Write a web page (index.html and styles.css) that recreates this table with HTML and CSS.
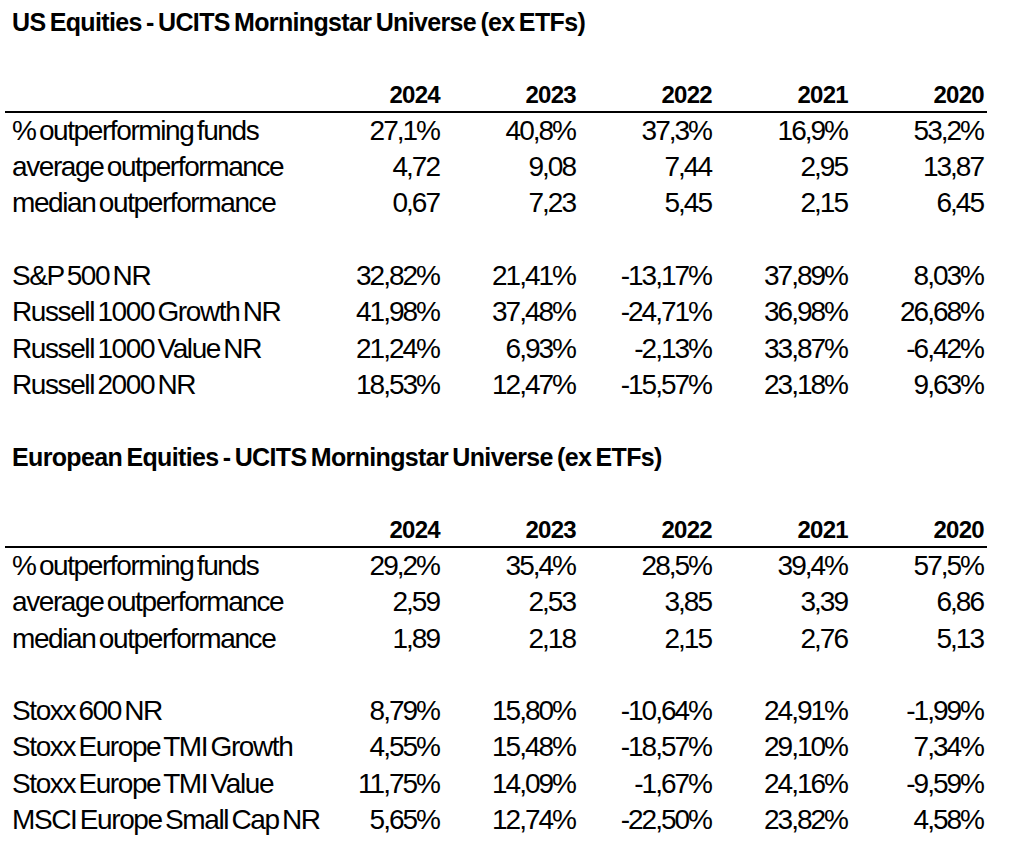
FILE: index.html
```html
<!DOCTYPE html>
<html lang="en">
<head>
<meta charset="utf-8">
<title>Equities - UCITS Morningstar Universe</title>
<link rel="stylesheet" href="styles.css">
</head>
<body>
<div class="page">
  <section class="block">
    <div class="title">US Equities - UCITS Morningstar Universe (ex ETFs)</div>
    <div class="blank"></div>
    <div class="row head"><span class="label"></span><span>2024</span><span>2023</span><span>2022</span><span>2021</span><span>2020</span></div>
    <div class="row"><span class="label">% outperforming funds</span><span>27,1%</span><span>40,8%</span><span>37,3%</span><span>16,9%</span><span>53,2%</span></div>
    <div class="row"><span class="label">average outperformance</span><span>4,72</span><span>9,08</span><span>7,44</span><span>2,95</span><span>13,87</span></div>
    <div class="row"><span class="label">median outperformance</span><span>0,67</span><span>7,23</span><span>5,45</span><span>2,15</span><span>6,45</span></div>
    <div class="blank"></div>
    <div class="row"><span class="label">S&amp;P 500 NR</span><span>32,82%</span><span>21,41%</span><span>-13,17%</span><span>37,89%</span><span>8,03%</span></div>
    <div class="row"><span class="label">Russell 1000 Growth NR</span><span>41,98%</span><span>37,48%</span><span>-24,71%</span><span>36,98%</span><span>26,68%</span></div>
    <div class="row"><span class="label">Russell 1000 Value NR</span><span>21,24%</span><span>6,93%</span><span>-2,13%</span><span>33,87%</span><span>-6,42%</span></div>
    <div class="row"><span class="label">Russell 2000 NR</span><span>18,53%</span><span>12,47%</span><span>-15,57%</span><span>23,18%</span><span>9,63%</span></div>
    <div class="blank"></div>
  </section>
  <section class="block">
    <div class="title">European Equities - UCITS Morningstar Universe (ex ETFs)</div>
    <div class="blank"></div>
    <div class="row head"><span class="label"></span><span>2024</span><span>2023</span><span>2022</span><span>2021</span><span>2020</span></div>
    <div class="row"><span class="label">% outperforming funds</span><span>29,2%</span><span>35,4%</span><span>28,5%</span><span>39,4%</span><span>57,5%</span></div>
    <div class="row"><span class="label">average outperformance</span><span>2,59</span><span>2,53</span><span>3,85</span><span>3,39</span><span>6,86</span></div>
    <div class="row"><span class="label">median outperformance</span><span>1,89</span><span>2,18</span><span>2,15</span><span>2,76</span><span>5,13</span></div>
    <div class="blank"></div>
    <div class="row"><span class="label">Stoxx 600 NR</span><span>8,79%</span><span>15,80%</span><span>-10,64%</span><span>24,91%</span><span>-1,99%</span></div>
    <div class="row"><span class="label">Stoxx Europe TMI Growth</span><span>4,55%</span><span>15,48%</span><span>-18,57%</span><span>29,10%</span><span>7,34%</span></div>
    <div class="row"><span class="label">Stoxx Europe TMI Value</span><span>11,75%</span><span>14,09%</span><span>-1,67%</span><span>24,16%</span><span>-9,59%</span></div>
    <div class="row"><span class="label">MSCI Europe Small Cap NR</span><span>5,65%</span><span>12,74%</span><span>-22,50%</span><span>23,82%</span><span>4,58%</span></div>
  </section>
</div>
</body>
</html>
```
FILE: styles.css
```css
html, body {
  margin: 0;
  padding: 0;
  background: #ffffff;
}

body {
  font-family: "Liberation Sans", Arial, sans-serif;
  color: #000000;
}

.page {
  padding: 4px 0 0 5px;
  width: 982px;
}

.block {
  display: flex;
  flex-direction: column;
}

.title,
.blank,
.row {
  height: 36.27px;
  box-sizing: border-box;
}

.title {
  display: flex;
  align-items: center;
  padding-left: 7px;
  font-size: 25px;
  font-weight: bold;
  letter-spacing: -0.65px;
  word-spacing: -2px;
  white-space: nowrap;
}

.row {
  display: grid;
  grid-template-columns: 302px repeat(5, 136px);
  align-items: center;
  font-size: 28px;
  letter-spacing: -2px;
  line-height: 1;
}

.row span {
  text-align: right;
  padding-right: 4px;
  white-space: nowrap;
}

.row .label {
  text-align: left;
  padding-left: 7px;
  padding-right: 0;
  letter-spacing: -1.4px;
  word-spacing: -3px;
}

.head {
  font-size: 24px;
  font-weight: bold;
  letter-spacing: -0.7px;
  border-bottom: 2px solid #000000;
  padding-top: 2px;
}

.head span {
  padding-right: 3px;
}
```
